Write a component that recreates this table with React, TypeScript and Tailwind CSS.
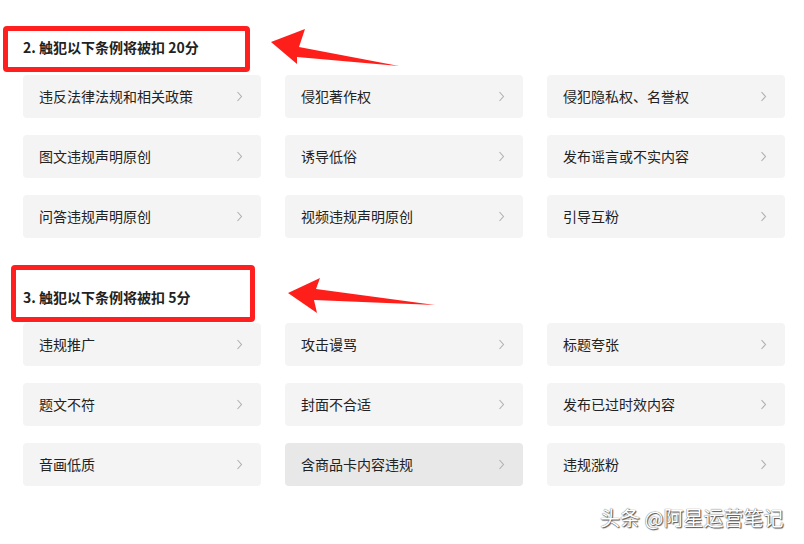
import React from 'react';

const sections = [
  {
    title: '2. 触犯以下条例将被扣 20分',
    items: ['违反法律法规和相关政策', '侵犯著作权', '侵犯隐私权、名誉权', '图文违规声明原创', '诱导低俗', '发布谣言或不实内容', '问答违规声明原创', '视频违规声明原创', '引导互粉'],
  },
  {
    title: '3. 触犯以下条例将被扣 5分',
    items: ['违规推广', '攻击谩骂', '标题夸张', '题文不符', '封面不合适', '发布已过时效内容', '音画低质', '含商品卡内容违规', '违规涨粉'],
  },
];

const Chevron = () => (
  <svg width="7" height="11" viewBox="0 0 7 11" fill="none" className="shrink-0">
    <path d="M1.5 1 L5.5 5.5 L1.5 10" stroke="#b0b0b0" strokeWidth="1.1" />
  </svg>
);

function Card({ label, active }: { label: string; active?: boolean }) {
  return (
    <div
      className={`flex h-[43px] items-center justify-between rounded-[4px] pl-4 pr-[18px] ${
        active ? 'bg-[#e8e8e8]' : 'bg-[#f4f4f4]'
      }`}
    >
      <span className="text-[14px] text-[#222]">{label}</span>
      <Chevron />
    </div>
  );
}

export default function App() {
  return (
    <div
      className="relative h-[544px] w-[804px] overflow-hidden bg-white pl-[23px] pr-[19px] pt-[33px]"
      style={{ fontFamily: '"Microsoft YaHei", "Noto Sans CJK SC", "Noto Sans", sans-serif' }}
    >
      {sections.map((s, si) => (
        <div key={s.title} className={si === 0 ? 'mb-[45px]' : ''}>
          <div className={`flex h-[28px] items-center text-[14px] font-bold text-[#222] ${si === 0 ? 'mb-[14px]' : 'mb-[12px]'}`}>
            {s.title}
          </div>
          <div className="grid grid-cols-3 gap-x-[24px] gap-y-[17px]">
            {s.items.map((it) => (
              <Card key={it} label={it} active={it === '含商品卡内容违规'} />
            ))}
          </div>
        </div>
      ))}

      {/* red annotations */}
      <div className="absolute left-[3px] top-[26px] h-[46px] w-[247px] rounded-[4px] border-[5px] border-[#ff1f1f]" />
      <div className="absolute left-[11px] top-[265px] h-[57px] w-[244px] rounded-[4px] border-[5px] border-[#ff1f1f]" />
      <svg className="pointer-events-none absolute left-0 top-0" width="804" height="544">
        <polygon points="271,42 305,29 299,47 399,66 297,57 297,64" fill="#ff1f1a" />
        <polygon points="288,293 320,278 316,289 435,305 314,300 317,313" fill="#ff1f1a" />
      </svg>

      <div className="absolute left-[600px] top-[503px] text-[20px] text-white [text-shadow:0_0_1px_#333,1px_1px_1px_#555]">
        头条 @阿星运营笔记
      </div>
    </div>
  );
}
